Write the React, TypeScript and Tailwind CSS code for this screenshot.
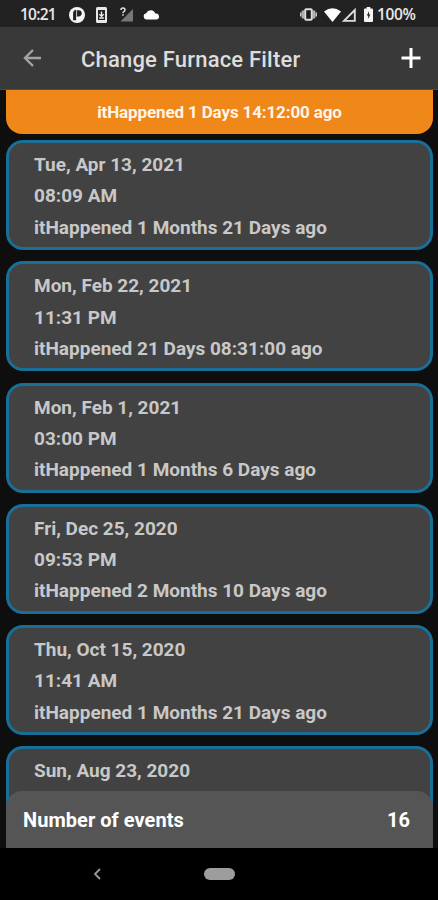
const events = [
  { date: 'Tue, Apr 13, 2021', time: '08:09 AM', since: 'itHappened 1 Months 21 Days ago' },
  { date: 'Mon, Feb 22, 2021', time: '11:31 PM', since: 'itHappened 21 Days 08:31:00 ago' },
  { date: 'Mon, Feb 1, 2021', time: '03:00 PM', since: 'itHappened 1 Months 6 Days ago' },
  { date: 'Fri, Dec 25, 2020', time: '09:53 PM', since: 'itHappened 2 Months 10 Days ago' },
  { date: 'Thu, Oct 15, 2020', time: '11:41 AM', since: 'itHappened 1 Months 21 Days ago' },
  { date: 'Sun, Aug 23, 2020', time: '', since: '' },
];

function StatusBar() {
  return (
    <div className="flex h-[27px] shrink-0 items-center bg-[#222222] pt-[2px] pl-[20px] font-['Open_Sans',sans-serif] text-[15.5px] font-semibold text-[#e8e8e8]">
      <span className="w-[49px] tracking-[-0.75px]">10:21</span>
      <svg className="h-[16px] w-[16px]" viewBox="0 0 16 16">
        <circle cx="8" cy="8" r="8" fill="#f5f5f5" />
        <path d="M5.6 13.2V6.2Q5.6 4.5 7.2 4.2" fill="none" stroke="#222" strokeWidth="3" />
        <path d="M7.6 3.2H9.6A3 3 0 0 1 9.6 9.4H7.6Z" fill="#222" />
        <path d="M7.6 4V9" stroke="#ddd" strokeWidth="0.7" />
      </svg>
      <svg className="ml-[11px] h-[16px] w-[11px]" viewBox="0 0 11 16">
        <rect width="11" height="16" rx="1.5" fill="#e8e8e8" />
        <rect x="2" y="3" width="7" height="10" fill="#252525" />
        <path d="M5.5 4.5V9M3.3 7.2L5.5 9.4L7.7 7.2M3.2 11H7.8" fill="none" stroke="#eee" strokeWidth="1.3" />
      </svg>
      <svg className="ml-[13px] h-[16px] w-[14px]" viewBox="0 0 14 16">
        <path d="M13 2V14.5H0.5Z" fill="#777" />
        <path d="M0 0H6.4V7H0Z" fill="#222" />
        <path d="M0.9 3Q1 1 3 1T5 3Q5 4 3.8 4.7Q3 5.2 3 6.2M3 7.3V8.8" fill="none" stroke="#e0e0e0" strokeWidth="1.5" />
      </svg>
      <svg className="ml-[9px] h-[10px] w-[17px]" viewBox="0 0 17 10">
        <path d="M3.5 9.5A3.2 3.2 0 0 1 3.2 3.2A5 5 0 0 1 12.4 3.6A3 3 0 0 1 13.6 9.5Z" fill="#fff" />
      </svg>
      <svg className="ml-[140px] h-[13px] w-[17px]" viewBox="0 0 17 13">
        <path d="M0.8 4.5V8.5M16.2 4.5V8.5" stroke="#c8c8c8" strokeWidth="1.6" />
        <path d="M3 2.5V10.5M14 2.5V10.5" stroke="#b0b0b0" strokeWidth="2.6" />
        <rect x="5.2" y="1.2" width="6.6" height="10.6" rx="1" fill="#1c1c1c" stroke="#dedede" strokeWidth="2" />
      </svg>
      <svg className="ml-[7px] h-[14px] w-[17px]" viewBox="0 0 17 14">
        <path d="M0 3.5Q8.5 -3 17 3.5L8.5 14Z" fill="#fff" />
      </svg>
      <svg className="ml-[1px] h-[14px] w-[14px]" viewBox="0 0 14 14">
        <path d="M12.8 2V12.9H2Z" fill="none" stroke="#ddd" strokeWidth="1.9" />
      </svg>
      <svg className="ml-[8px] h-[15px] w-[9px]" viewBox="0 0 9 15">
        <path d="M2.7 0H6.3V1.5H8Q9 1.5 9 2.5V14Q9 15 8 15H1Q0 15 0 14V2.5Q0 1.5 1 1.5H2.7Z" fill="#f4f4f4" />
        <path d="M5 4.3L2.8 8.6H4.2V12L6.4 7.6H5Z" fill="#222" />
      </svg>
      <span className="ml-[4px] tracking-[-0.4px]">100%</span>
    </div>
  );
}

function TitleBar() {
  return (
    <header className="flex h-[63px] shrink-0 items-center border-b border-[#75421f] bg-[#393939] pr-[17px] pl-[23px]">
      <svg className="h-[18px] w-[19px]" viewBox="0 0 19 18" fill="none" stroke="#a3a3a3" strokeWidth="2.4">
        <path d="M18 9H2M10 1L2 9L10 17" />
      </svg>
      <h1 className="ml-[39px] flex-1 pt-[2px] text-[22px] font-medium tracking-[0.19px] whitespace-nowrap text-[#dddddd]">Change Furnace Filter</h1>
      <svg className="h-[20px] w-[20px]" viewBox="0 0 20 20" stroke="#fff" strokeWidth="3">
        <path d="M10 0V20M0.5 10H19.5" />
      </svg>
    </header>
  );
}

export default function App() {
  return (
    <div className="flex h-[900px] w-[438px] flex-col overflow-hidden bg-[#0e0e0e] font-['Roboto',sans-serif]">
      <StatusBar />
      <TitleBar />
      <main className="relative h-[758px] shrink-0 overflow-hidden pr-[5px] pl-[6px]">
        <div className="flex h-[44px] items-center justify-center rounded-b-[16px] bg-[#f08719] pt-[2px] text-[17px] font-bold tracking-[-0.13px] text-[#fff5e8]">
          itHappened 1 Days 14:12:00 ago
        </div>
        <div className="mt-[6px] flex flex-col gap-[11.25px]">
          {events.map((event) => (
            <article
              key={event.date}
              className="h-[110px] rounded-[17px] border-[3px] border-[#196f98] bg-[#424242] pt-[6px] pl-[25px] text-[19px] leading-[31.3px] font-bold whitespace-nowrap text-[#c8c8c8]"
            >
              <p>{event.date}</p>
              <p>{event.time}</p>
              <p>{event.since}</p>
            </article>
          ))}
        </div>
        <footer className="absolute right-[5px] bottom-0 left-[6px] flex h-[57px] items-center justify-between rounded-t-[16px] bg-[#555555] pr-[23px] pl-[17px] text-[20px] font-bold text-white">
          <span className="tracking-[0.04px]">Number of events</span>
          <span>16</span>
        </footer>
      </main>
      <nav className="flex flex-1 items-center bg-black pl-[93px]">
        <svg className="h-[12px] w-[8px]" viewBox="0 0 8 12" fill="none" stroke="#999" strokeWidth="1.8">
          <path d="M7 1L2 6L7 11" />
        </svg>
        <div className="ml-[103px] h-[12px] w-[31px] rounded-full bg-[#9d9d9d]" />
      </nav>
    </div>
  );
}
